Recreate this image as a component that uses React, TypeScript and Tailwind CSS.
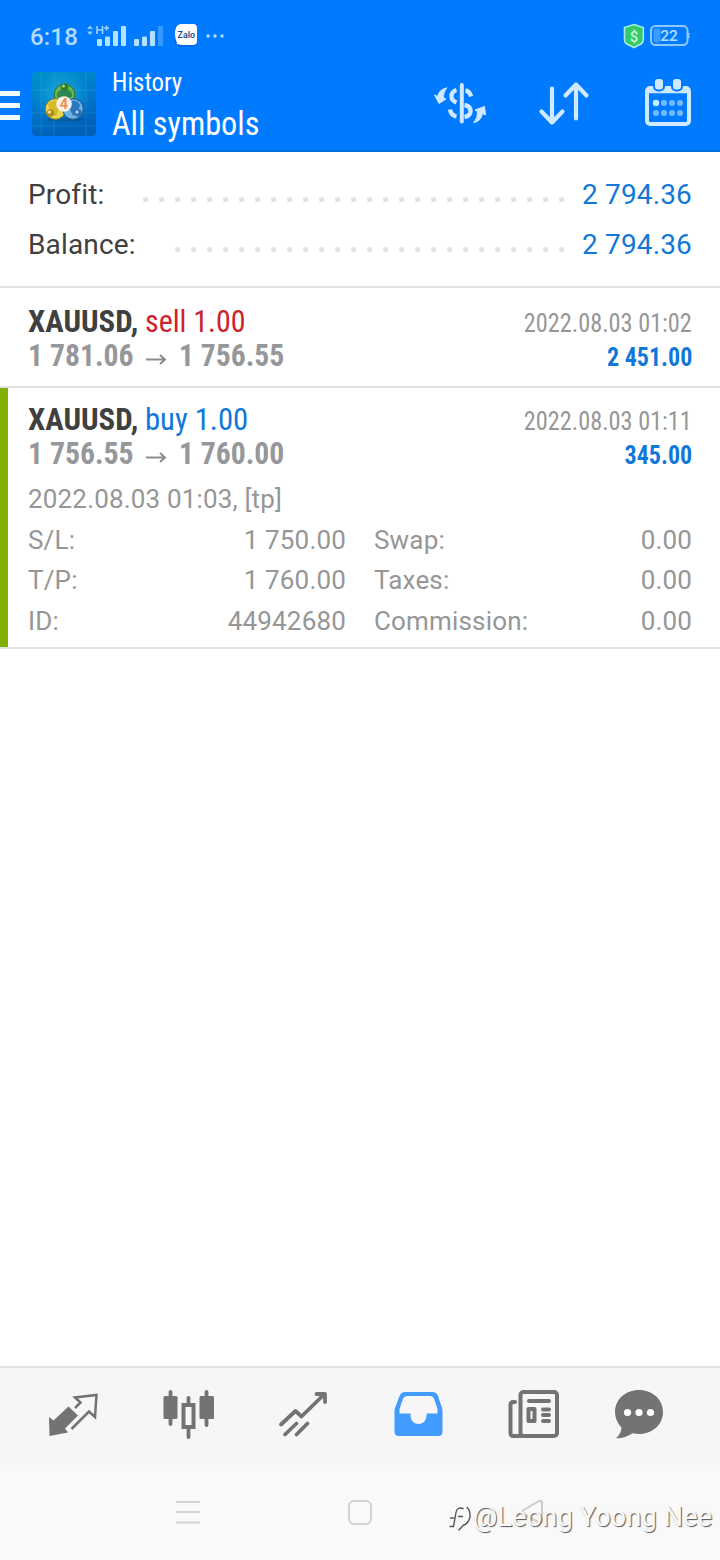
import React from "react";

const cond = "font-stretch-condensed inline-block whitespace-pre font-['Roboto_Condensed',Roboto,sans-serif]";

function StatusBar() {
  return (
    <div className="flex h-[72px] items-center justify-between pl-[30px] pr-[30px] text-[#b3dbff]">
      <div className="flex items-center">
        <span className="w-[57px] pt-0.5 text-[24px] leading-none font-medium tracking-[0.2px]">6:18</span>
        <svg width="140" height="28" viewBox="87 22 140 28" fill="#b3e0ff">
          <path d="M87 29l3-3.500 3 3.500zM87 31.500l3 3.500 3-3.500z" opacity=".8" />
          <path d="M97 26v8M102.500 26v8M97 30h5.500M104 28h5M106.500 25.500v5" stroke="#a0d2ff" strokeWidth="1.600" fill="none" />
          <rect x="97" y="39" width="5" height="7" rx="1" />
          <rect x="105" y="36.500" width="5" height="9.500" rx="1" />
          <rect x="113" y="31" width="5" height="15" rx="1" />
          <rect x="121" y="26" width="5" height="20" rx="1" />
          <rect x="134" y="39" width="5" height="7" rx="1" />
          <rect x="142" y="36.500" width="5" height="9.500" rx="1" />
          <rect x="150" y="31" width="5" height="15" rx="1" />
          <rect x="158" y="26" width="5" height="20" rx="1" opacity=".3" />
          <rect x="175" y="24" width="22" height="23" rx="5" fill="#0068e0" />
          <path d="M181 24h12q4 0 4 4v13q0 4-4 4h-10q-3 0-5-1l-1.500 1q1-2 0-3.500q-1.500-3-1.500-7.500q0-10 6-10z" fill="#fff" />
          <text x="177.500" y="38" fontSize="9" fontWeight="600" fill="#1a4f8a" textLength="17.500" lengthAdjust="spacingAndGlyphs">Zalo</text>
          <circle cx="208" cy="36" r="1.700" />
          <circle cx="215" cy="36" r="1.700" />
          <circle cx="222" cy="36" r="1.700" />
        </svg>
      </div>
      <svg width="67" height="28" viewBox="623 22 67 28">
        <path d="M634 24.500l9.300 3V40q0 2.500-2.500 4L634 47.500 627 44q-2.500-1.500-2.500-4V27.500z" fill="#35c96b" stroke="#a5eedf" strokeWidth="1.600" />
        <text x="634" y="41.500" fontSize="15" fontWeight="500" textAnchor="middle" fill="#c5f5d8">$</text>
        <rect x="651" y="26" width="36.500" height="19" rx="4.500" fill="none" stroke="#8dc8ff" strokeWidth="2" />
        <path d="M688 33h1.500v5H688z" fill="#8dc8ff" />
        <rect x="653.500" y="28.500" width="7" height="14" rx="2" fill="#3d9bff" />
        <text x="669" y="41" fontSize="15.500" fontWeight="500" textAnchor="middle" fill="#b8deff">22</text>
      </svg>
    </div>
  );
}

function AppLogo() {
  return (
    <svg width="64" height="64" viewBox="0 0 64 64" className="ml-3">
      <defs>
        <linearGradient id="sky" x1="0" y1="0" x2="0.300" y2="1">
          <stop offset="0" stopColor="#0092cc" />
          <stop offset="0.500" stopColor="#007acb" />
          <stop offset="1" stopColor="#0060b8" />
        </linearGradient>
        <radialGradient id="glow">
          <stop offset="0" stopColor="#21b5e2" stopOpacity=".8" />
          <stop offset="1" stopColor="#21b5e2" stopOpacity="0" />
        </radialGradient>
      </defs>
      <rect width="64" height="64" rx="4" fill="url(#sky)" />
      <circle cx="30" cy="24" r="28" fill="url(#glow)" />
      <path d="M9 0v64M22 0v64M54 0v64M0 18h64M0 41h64M0 54h64" stroke="#4cc4e8" strokeWidth=".7" opacity=".3" />
      <ellipse cx="33" cy="47.500" rx="18" ry="2" fill="#024a80" opacity=".5" />
      <circle cx="32.500" cy="22.500" r="10.300" fill="#6fb850" stroke="#2d6a28" strokeWidth="1" />
      <circle cx="23.500" cy="37" r="10.300" fill="#e8d552" stroke="#80781c" strokeWidth="1" />
      <circle cx="41" cy="37" r="10.300" fill="#6fb2e4" stroke="#1b5890" strokeWidth="1" />
      <path d="M24.500 24q1-7 8-7t8 7q-3 3-8 3t-8-3z" fill="#2c8a50" />
      <path d="M16 33q3-5 9-4l3 6-4 9q-6-2-8-11z" fill="#d8b92a" />
      <path d="M48 33q-3-5-8-4l-3 6 4 9q5-2 7-11z" fill="#2a78c0" />
      <circle cx="32.500" cy="15" r="3.800" fill="#2f7d2c" />
      <circle cx="18.500" cy="41" r="3.800" fill="#b08b18" />
      <circle cx="46" cy="41" r="3.800" fill="#2b71ad" />
      <circle cx="31.500" cy="14" r="1.500" fill="#a8dc7f" />
      <circle cx="17.500" cy="40" r="1.500" fill="#fff0a0" />
      <circle cx="45" cy="40" r="1.500" fill="#b5e0ff" />
      <circle cx="32" cy="32" r="7.800" fill="#f7f1e6" />
      <text x="32" y="37.300" fontSize="14.500" fontWeight="600" textAnchor="middle" fill="#ee8a4e">4</text>
    </svg>
  );
}

function HeaderIcons() {
  return (
    <svg width="260" height="56" viewBox="432 76 260 56" fill="none" stroke="#cfe9ff" strokeLinecap="round" strokeLinejoin="round">
      <path d="M461.800 85v36.500" strokeWidth="4" />
      <path d="M456.500 90Q451.500 91.500 451.500 96.500Q451.500 100.500 456.500 102.500M465.500 90.500q4 .5 5.500 6M464.500 105Q470.500 106 470.500 111Q470.500 116 464.500 117M456.500 116.500Q451 115.500 450 109.500" strokeWidth="4.400" strokeLinecap="butt" />
      <g fill="#cfe9ff" stroke="#cfe9ff" strokeWidth="1">
        <path d="M446.500 88Q439.500 89 437.500 96.500L434.500 95 439 103.500 446 99 443.500 98Q443 92.500 446.500 88z" />
        <path d="M474 122.500Q481 121.500 482.500 113.500L485.500 115 484.500 106.500 475 110 477.500 111.500Q478 117.500 474 122.500z" />
      </g>
      <path d="M552 88.500v33M541.500 111.500L552 122.500l10.500-11M576 118.500v-33M565.500 95.500L576 84.500l10.500 11" strokeWidth="4.200" />
      <rect x="647" y="88" width="42" height="36" rx="3" strokeWidth="4" />
      <path d="M647 90.500h42" strokeWidth="5.500" strokeLinecap="butt" />
      <rect x="654" y="78" width="10" height="12.500" rx="4" fill="#cfe9ff" stroke="#007aff" strokeWidth="2" />
      <rect x="672" y="78" width="10" height="12.500" rx="4" fill="#cfe9ff" stroke="#007aff" strokeWidth="2" />
      <g stroke="none" fill="#75b9ff">
        <circle cx="656" cy="103" r="3.200" fill="#c8f0ff" />
        <circle cx="664" cy="103" r="3" /><circle cx="672" cy="103" r="3" /><circle cx="680" cy="103" r="3" />
        <circle cx="656" cy="113" r="3" /><circle cx="664" cy="113" r="3" /><circle cx="672" cy="113" r="3" /><circle cx="680" cy="113" r="3" />
      </g>
    </svg>
  );
}

function Header() {
  return (
    <header className="h-[152px] border-b-2 border-[#0570e0] bg-[#007aff] text-white">
      <StatusBar />
      <div className="flex h-16 items-center pr-7">
        <div className="mt-0.5 flex w-5 flex-col gap-[7px]">
          <i className="h-[5px] bg-[#f2fbff]" />
          <i className="h-[5px] bg-[#f2fbff]" />
          <i className="h-[5px] bg-[#f2fbff]" />
        </div>
        <AppLogo />
        <div className="ml-4 flex flex-1 flex-col items-start pb-px">
          <span className={`${cond} origin-left scale-x-[0.955] text-[26px] leading-[38px]`}>History</span>
          <span className={`${cond} origin-left scale-x-[0.948] text-[34px] leading-[44px]`}>All symbols</span>
        </div>
        <HeaderIcons />
      </div>
    </header>
  );
}

function SummaryRow({ label, value, dots }: { label: string; value: string; dots: number }) {
  return (
    <div className="flex h-[50px] items-center justify-between text-[28px] leading-none text-[#404040]">
      <span className="flex-1 pt-0.5 tracking-[0.15px]">{label}</span>
      <span className="mt-[11px] mr-[18px] flex gap-[11px]">
        {Array.from({ length: dots }, (_, i) => (
          <i key={i} className="size-[5px] rounded-full bg-[#e2e2e2]" />
        ))}
      </span>
      <span className="pt-0.5 tracking-[0.15px] text-[#1178d8]">{value}</span>
    </div>
  );
}

type Trade = { side: string; color: string; open: string; close: string; time: string; profit: string };

function TradeHead({ side, color, open, close, time, profit }: Trade) {
  return (
    <div className="flex justify-between">
      <div className="flex flex-col items-start">
        <div className="flex gap-[7px] text-[32px] leading-[34px]">
          <b className={`${cond} w-[110px] origin-left scale-x-[0.963] text-[#404040]`}>XAUUSD,</b>
          <span className={`${cond} origin-left ${color}`}>{side}</span>
        </div>
        <div className="flex items-center text-[32px] leading-[34px] font-bold text-[#96979a]">
          <span className={`${cond} w-[105px] origin-left scale-x-[0.929]`}>{open}</span>
          <svg width="22" height="12" viewBox="0 0 22 12" className="mt-2 mr-3 ml-3" fill="none" stroke="#8c8c8c" strokeWidth="2">
            <path d="M1 6.500h19M15 2L20 6.500l-5 4.500" />
          </svg>
          <span className={`${cond} origin-left scale-x-[0.926]`}>{close}</span>
        </div>
      </div>
      <div className="flex flex-col items-end pt-0.5">
        <span className={`${cond} origin-right scale-x-[0.934] text-[26px] leading-[34px] text-[#969696]`}>{time}</span>
        <span className={`${cond} origin-right scale-x-[0.924] text-[26px] leading-[34px] font-bold text-[#1178d8]`}>{profit}</span>
      </div>
    </div>
  );
}

const details = [
  ["S/L:", "1 750.00", "Swap:", "0.00"],
  ["T/P:", "1 760.00", "Taxes:", "0.00"],
  ["ID:", "44942680", "Commission:", "0.00"],
];

const g = "#737373";

function TabBar() {
  return (
    <nav className="flex h-[99px] items-start justify-between border-t-2 border-[#e2e2e2] bg-[#f6f6f6] pr-[54px] pl-[47px] pt-[18px]">
      <svg width="54" height="56" viewBox="47.500 1386 54 56" fill={g}>
        <path d="M69 1406.500L78.500 1415.500 65.500 1428.500 68.500 1432.500 50 1436 49.500 1417 54 1420.500z" />
        <path d="M75.500 1408L81 1402.500 75.500 1397.500 97 1395 95.500 1417 89.500 1411.500 72 1429" fill="none" stroke={g} strokeWidth="2.500" />
      </svg>
      <svg width="54" height="56" viewBox="160 1386 54 56" overflow="visible" fill={g}>
        <rect x="163.500" y="1396" width="14" height="23" rx="1.500" />
        <rect x="199.500" y="1396" width="14.500" height="23" rx="1.500" />
        <path d="M170.500 1392v32M206.500 1392v33M188.500 1398v6M188.500 1428v9" stroke={g} strokeWidth="3.800" strokeLinecap="round" />
        <rect x="183.500" y="1405" width="10" height="22" fill="none" stroke={g} strokeWidth="4" />
      </svg>
      <svg width="54" height="56" viewBox="273 1386 54 56" overflow="visible" fill="none" stroke={g} strokeWidth="3.800" strokeLinecap="round" strokeLinejoin="round">
        <path d="M281 1424.500l14.500-13.500 6 5.500L324.500 1394M316.500 1394H325V1402M285 1434.500l11.500-11M296.500 1434.500l11-11" />
      </svg>
      <svg width="54" height="56" viewBox="386 1386 54 56" overflow="visible">
        <path fillRule="evenodd" fill="#429bff" d="M405 1392H432Q436.500 1392 438 1396L442 1408Q442.500 1410 442.500 1412V1431.500Q442.500 1436 438 1436H399Q394.500 1436 394.500 1431.500V1412Q394.500 1410 395 1408L399.500 1396Q401 1392 405 1392zM407 1396Q404 1396 403 1398.500L399.500 1409V1413.500H410.500V1416A8 8 0 0 0 426.500 1416V1413.500H437.500V1409L434 1398.500Q433 1396 430.500 1396z" />
      </svg>
      <svg width="54" height="56" viewBox="499 1386 54 56" overflow="visible" fill="none" stroke={g}>
        <rect x="520.500" y="1392" width="36.500" height="44" rx="3" strokeWidth="4" />
        <path d="M515 1402H513.500Q510.500 1402 510.500 1405V1433Q510.500 1436 513.500 1436H522" strokeWidth="4" strokeLinecap="round" />
        <path d="M529 1401h20M543 1409.500h6M543 1415h6M543 1421h6" strokeWidth="4" strokeLinecap="round" />
        <rect x="528.500" y="1409" width="6" height="12" strokeWidth="4" strokeLinejoin="round" />
      </svg>
      <svg width="54" height="56" viewBox="612 1386 54 56" fill={g}>
        <path d="M639 1390C652.500 1390 663 1399.500 663 1412S652.500 1434 639 1434Q635.500 1434 632.500 1433.200Q625 1438.500 616 1438.200Q621 1434 621.500 1427.500Q615 1421 615 1412C615 1399.500 625.500 1390 639 1390z" />
        <circle cx="627.500" cy="1412.500" r="3.600" fill="#fff" />
        <circle cx="639" cy="1412.500" r="3.600" fill="#fff" />
        <circle cx="650.500" cy="1412.500" r="3.600" fill="#fff" />
      </svg>
    </nav>
  );
}

function SystemNav() {
  return (
    <div className="relative flex h-[95px] items-center justify-between bg-[#f9f9f9] px-[174px] pb-0.5">
      <svg width="28" height="28" viewBox="0 0 28 28" stroke="#d3d3d3" strokeWidth="2.200">
        <path d="M2 4h24M2 14h24M2 24.500h24" />
      </svg>
      <svg width="28" height="28" viewBox="0 0 28 28" fill="none" stroke="#d3d3d3" strokeWidth="2">
        <rect x="3" y="3" width="22" height="23" rx="5" />
      </svg>
      <svg width="28" height="28" viewBox="0 0 28 28" fill="none" stroke="#cccccc" strokeWidth="2" strokeLinejoin="round">
        <path d="M4 13L21 3q3-1 3 2v18q0 3-3 1.500L4 15.500q-2-1.300 0-2.500z" />
      </svg>
      <div className="absolute top-[36px] right-[7px] flex items-center text-[#fafafa]">
        <svg width="26" height="32" viewBox="447 1502 26 32" fill="none" strokeLinecap="round">
          <path d="M467 1508.500Q470.500 1511.500 470 1518Q468.500 1524.500 463 1526.500L459 1531M463 1509.500Q457 1507.500 456 1513.500L453.500 1527.500H450M450.500 1519h3M458.500 1517.500h4" stroke="#555" strokeWidth="1.400" />
        </svg>
        <span className="w-[240px] text-[27px] leading-8 tracking-[0.200px] whitespace-nowrap [text-shadow:1px_1px_1px_#555]">@Leong Yoong Nee</span>
      </div>
    </div>
  );
}

export default function App() {
  return (
    <div className="flex h-[1560px] w-[720px] flex-col overflow-hidden bg-white font-[Roboto,sans-serif]">
      <Header />
      <section className="h-[136px] border-b-2 border-[#e2e2e2] px-7 pt-[17px]">
        <SummaryRow label="Profit:" value="2 794.36" dots={27} />
        <SummaryRow label="Balance:" value="2 794.36" dots={25} />
      </section>
      <section className="h-[100px] border-b-2 border-[#e2e2e2] px-7 pt-4">
        <TradeHead side="sell 1.00" color="scale-x-[0.935] text-[#c9252b]" open="1 781.06" close="1 756.55" time="2022.08.03 01:02" profit="2 451.00" />
      </section>
      <section className="flex h-[261px] border-b-2 border-[#e2e2e2]">
        <div className="w-2 bg-[#80b000]" />
        <div className="flex-1 pt-3.5 pr-7 pl-5">
          <TradeHead side="buy 1.00" color="scale-x-[0.958] text-[#1178d8]" open="1 756.55" close="1 760.00" time="2022.08.03 01:11" profit="345.00" />
          <div className="mt-1.5 text-[26px] leading-[42px] tracking-[0.170px] text-[#969696]">2022.08.03 01:03, [tp]</div>
          <div className="text-[26px] leading-[40.400px] tracking-[0.170px] text-[#969696]">
            {details.map(([a, b, c, d]) => (
              <div key={a} className="flex">
                <span className="flex-1">{a}</span>
                <span className="mr-[28px]">{b}</span>
                <span className="w-[200px]">{c}</span>
                <span className="w-[118px] text-right">{d}</span>
              </div>
            ))}
          </div>
        </div>
      </section>
      <main className="flex-1" />
      <TabBar />
      <SystemNav />
    </div>
  );
}
